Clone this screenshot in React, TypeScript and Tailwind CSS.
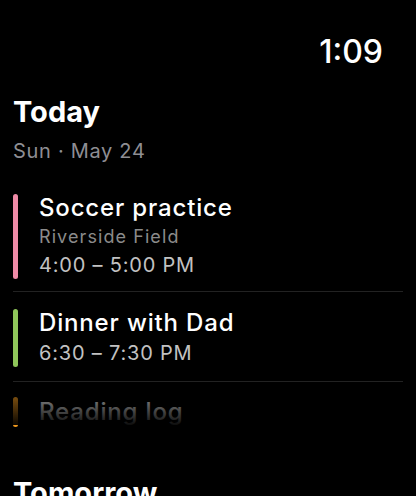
import React from "react";

type Event = {
  title: string;
  place?: string;
  time: string;
  bar: string;
  row: string;
  timeGap: string;
};

const events: Event[] = [
  {
    title: "Soccer practice",
    place: "Riverside Field",
    time: "4:00 – 5:00 PM",
    bar: "bg-[#ef8ba7]",
    row: "pt-[15px] pb-[12px]",
    timeGap: "mt-0",
  },
  {
    title: "Dinner with Dad",
    time: "6:30 – 7:30 PM",
    bar: "bg-[#8fc65a]",
    row: "pt-[17px] pb-[14px]",
    timeGap: "mt-[2px]",
  },
];

function EventRow({ e }: { e: Event }) {
  return (
    <div className={`flex gap-[21px] border-b border-[#222222] ${e.row}`}>
      <div className={`w-[5px] shrink-0 rounded-full ${e.bar}`} />
      <div className="flex flex-col">
        <span className="text-[24px] font-medium leading-[28px] tracking-[0.035em] text-white">
          {e.title}
        </span>
        {e.place && (
          <span className="mt-[1px] text-[18px] leading-[28px] tracking-[0.06em] text-[#8b8b8b]">
            {e.place}
          </span>
        )}
        <span className={`text-[20px] leading-[28px] tracking-[0.04em] text-[#c2c2c2] ${e.timeGap}`}>
          {e.time}
        </span>
      </div>
    </div>
  );
}

export default function App() {
  return (
    <div className="relative h-[496px] w-[416px] overflow-hidden bg-black font-['Inter',sans-serif] antialiased">
      {/* Clock */}
      <div className="flex justify-end pr-[33px] pt-[36px]">
        <span className="text-[32px] font-medium leading-[32px] text-white">1:09</span>
      </div>

      <div className="px-[13px]">
        {/* Today header */}
        <h1 className="mt-[28px] text-[29px] font-bold leading-[32px] text-white">Today</h1>
        <p className="mt-[11px] text-[20px] leading-[24px] tracking-[0.035em] text-[#8e8e93]">
          Sun · May 24
        </p>

        {/* Events */}
        <div className="mt-[16px] flex flex-col">
          {events.map((e) => (
            <EventRow key={e.title} e={e} />
          ))}
          <div className="flex gap-[21px] pt-[15px]">
            <div className="w-[5px] shrink-0 rounded-full bg-[#f29a1e]" />
            <span className="text-[24px] font-medium leading-[30px] tracking-[0.035em] text-white">
              Reading log
            </span>
          </div>
        </div>

        {/* Tomorrow header */}
        <h2 className="mt-[50px] text-[29px] font-bold leading-[32px] text-white">Tomorrow</h2>
      </div>

      {/* Scroll fade */}
      <div className="pointer-events-none absolute left-0 right-0 top-[394px] h-[31px] bg-linear-to-b from-black/45 to-black/95" />
    </div>
  );
}
